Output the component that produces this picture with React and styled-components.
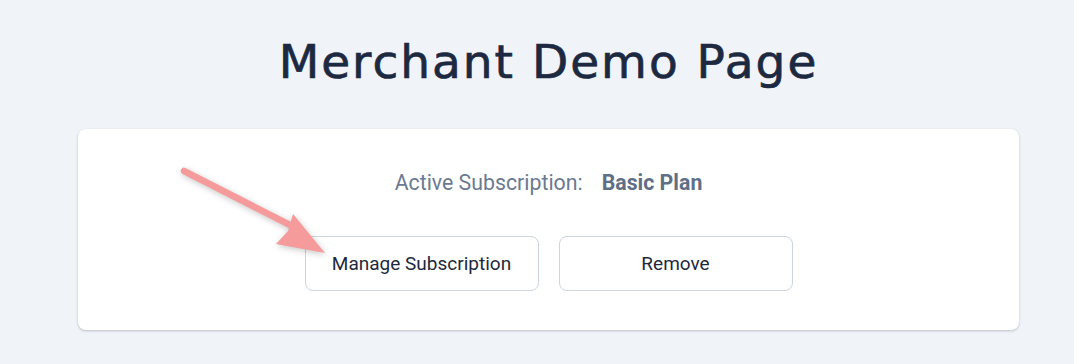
import styled, { createGlobalStyle } from "styled-components";

const GlobalStyle = createGlobalStyle`
  html, body {
    margin: 0;
    padding: 0;
    background: #f0f3f8;
  }
  body {
    font-family: Roboto, "Liberation Sans", sans-serif;
  }
`;

const Page = styled.div`
  min-height: 364px;
  padding: 32px 55px 0 78px;
  box-sizing: border-box;
  display: flex;
  flex-direction: column;
`;

const Title = styled.h1`
  margin: 0 0 37px;
  text-align: center;
  font-family: "DejaVu Sans", "Open Sans", sans-serif;
  font-weight: 400;
  font-size: 47px;
  line-height: 60px;
  letter-spacing: 2px;
  color: #1c2940;
  -webkit-text-stroke: 0.7px #1c2940;
`;

const Card = styled.section`
  position: relative;
  background: #ffffff;
  border-radius: 8px;
  box-shadow: 0 1px 3px rgba(15, 23, 42, 0.18), 0 1px 2px rgba(15, 23, 42, 0.06);
  padding: 42px 0 39px;
  display: flex;
  flex-direction: column;
  align-items: center;
  gap: 41px;
`;

const StatusRow = styled.div`
  display: flex;
  align-items: baseline;
  gap: 19px;
  font-size: 21.3px;
  line-height: 24px;
  color: #6b7a90;
`;

const PlanName = styled.strong`
  font-weight: 700;
  color: #5f6f86;
`;

const Actions = styled.div`
  display: flex;
  gap: 20px;
`;

const Button = styled.button`
  width: 234px;
  height: 55px;
  background: #ffffff;
  border: 1px solid #ccd5e0;
  border-radius: 8px;
  font-family: Roboto, "Liberation Sans", sans-serif;
  font-size: 19px;
  color: #1e293b;
  cursor: pointer;
`;

const Arrow = styled.svg`
  position: absolute;
  left: 100px;
  top: 36px;
  overflow: visible;
  pointer-events: none;
  filter: drop-shadow(1px 2px 3px rgba(0, 0, 0, 0.22));
`;

// annotation arrow pointing at the manage button
function PointerArrow() {
  return (
    <Arrow width="160" height="100" viewBox="0 0 160 100">
      <line
        x1="6"
        y1="6"
        x2="112"
        y2="60"
        stroke="#f59b9b"
        strokeWidth="6.5"
        strokeLinecap="round"
      />
      <path d="M115 49 L147 88 L98 79 L110 66 Z" fill="#f59b9b" />
    </Arrow>
  );
}

export default function App() {
  return (
    <>
      <GlobalStyle />
      <Page>
        <Title>Merchant Demo Page</Title>
        <Card>
          <PointerArrow />
          <StatusRow>
            <span>Active Subscription:</span>
            <PlanName>Basic Plan</PlanName>
          </StatusRow>
          <Actions>
            <Button>Manage Subscription</Button>
            <Button>Remove</Button>
          </Actions>
        </Card>
      </Page>
    </>
  );
}
